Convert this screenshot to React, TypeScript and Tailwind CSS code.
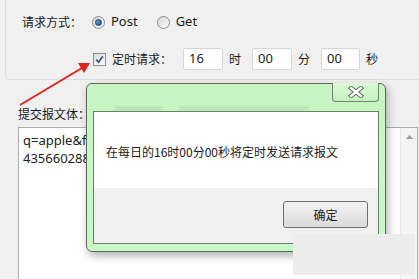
import React from "react";

const font = { fontFamily: '"Noto Sans CJK SC", "Noto Sans", sans-serif' };
const latin = { fontFamily: '"Noto Sans", "Noto Sans CJK SC", sans-serif' };

function Radio({ checked }: { checked?: boolean }) {
  return (
    <span className="w-[13px] h-[13px] rounded-full border border-[#8e8f8f] bg-gradient-to-br from-[#d9d9d9] to-[#fafafa] flex items-center justify-center">
      {checked && (
        <span className="w-[7px] h-[7px] rounded-full bg-gradient-to-br from-[#6fb0e8] to-[#1c4f8a] border border-[#1a3f6b]" />
      )}
    </span>
  );
}

function TimeBox({ value, width }: { value: string; width: string }) {
  return (
    <div className={`${width} h-[22px] bg-white border border-[#d6d6d6] rounded-[2px] flex items-center pl-[5px] text-[13px] text-[#222]`} style={latin}>
      {value}
    </div>
  );
}

export default function App() {
  return (
    <div className="w-[419px] h-[279px] bg-[#f0f0f0] relative overflow-hidden text-[#1b1b1b]" style={font}>
      {/* group box */}
      <div className="ml-[5px] -mt-[10px] w-[430px] h-[90px] border border-[#d5dfe5] rounded-[4px] pt-[21px]">
        <div className="flex items-center h-[20px] pl-[16px] text-[12px]">
          <span className="w-[70px]">请求方式：</span>
          <Radio checked />
          <span className="ml-[6px] text-[13px]" style={latin}>Post</span>
          <span className="ml-[19px]"><Radio /></span>
          <span className="ml-[6px] text-[13px]" style={latin}>Get</span>
        </div>
        <div className="flex items-center h-[22px] mt-[16px] pl-[87px] text-[12px]">
          <span className="w-[13px] h-[13px] border border-[#8e8f8f] bg-gradient-to-br from-[#dcdcdc] to-[#fbfbfb] flex items-center justify-center">
            <svg width="9" height="9" viewBox="0 0 9 9">
              <path d="M1.2 4.6 L3.6 7.2 L7.8 1.2" fill="none" stroke="#3b4f86" strokeWidth="1.6" />
            </svg>
          </span>
          <span className="ml-[6px] w-[71px]">定时请求：</span>
          <TimeBox value="16" width="w-[40px]" />
          <span className="ml-[6px] w-[23px]">时</span>
          <TimeBox value="00" width="w-[40px]" />
          <span className="ml-[6px] w-[23px]">分</span>
          <TimeBox value="00" width="w-[39px]" />
          <span className="ml-[6px]">秒</span>
        </div>
      </div>

      {/* request body */}
      <div className="ml-[18px] mt-[27px] text-[12px] h-[14px] leading-[14px]">提交报文体：</div>
      <div className="ml-[18px] mt-[6px] w-[400px] h-[160px] bg-white border border-[#abadb3] flex">
        <div className="flex-1 pl-[4px] pt-[3px] text-[13px] leading-[18px] text-[#222]" style={latin}>
          <div className="w-[63px] overflow-hidden whitespace-nowrap">
            <div>q=apple&amp;fmt=json</div>
            <div>4356602881&amp;sign</div>
          </div>
        </div>
        <div className="w-[17px] bg-[#f4f4f4] border-l border-[#e6e6e6] flex justify-center pt-[7px]">
          <svg width="7" height="4" viewBox="0 0 7 4">
            <path d="M0 4 L3.5 0 L7 4 Z" fill="#9a9a9a" />
          </svg>
        </div>
      </div>

      {/* red arrow */}
      <svg className="absolute left-0 top-0" width="120" height="120">
        <line x1="20" y1="105" x2="82" y2="68" stroke="#e3231f" strokeWidth="2" />
        <path d="M90 63 L78 63 L84 73 Z" fill="#e3231f" />
      </svg>

      {/* dialog */}
      <div className="absolute left-[86px] top-[83px] w-[300px] h-[169px] rounded-[6px] border border-[#5a6a5a] bg-gradient-to-b from-[#c6f5c3] to-[#cbf7c8] shadow-[2px_4px_8px_rgba(0,0,0,0.3)] flex flex-col pt-[27px] px-[6px] pb-[7px]">
        <div className="absolute left-[28px] top-[23px] w-[46px] h-[3px] bg-[#7d937d] blur-[1.5px] opacity-30" />
        <div className="absolute left-[92px] top-[23px] w-[130px] h-[3px] bg-[#7d937d] blur-[1.5px] opacity-25" />
        <div className="absolute right-[6px] -top-px w-[47px] h-[19px] border border-t-0 border-[#6f846f] rounded-b-[4px] bg-gradient-to-b from-[#d8fbd6] to-[#c6f3c3] flex items-center justify-center">
          <svg width="16" height="12" viewBox="0 0 16 12">
            <path d="M3 2 L13 10 M13 2 L3 10" stroke="#5f6f5f" strokeWidth="4.4" strokeLinecap="square" />
            <path d="M3 2 L13 10 M13 2 L3 10" stroke="#ffffff" strokeWidth="2.4" strokeLinecap="square" />
          </svg>
        </div>
        <div className="flex-1 border border-[#6b7f6b] flex flex-col">
          <div className="flex-1 bg-white pl-[12px] pt-[32px] text-[12px] leading-[16px]">
            在每日的16时00分00秒将定时发送请求报文
          </div>
          <div className="h-[55px] bg-[#f0f0f0] flex justify-end pt-[13px] pr-[10px]">
            <div className="w-[85px] h-[27px] rounded-[3px] border border-[#707070] bg-gradient-to-b from-[#f4f4f4] to-[#dadada] flex items-center justify-center text-[12px]">
              确定
            </div>
          </div>
        </div>
      </div>

      {/* watermark patch */}
      <div className="absolute left-[293px] top-[234px] w-[122px] h-[41px] bg-[#ececec]" />
    </div>
  );
}
